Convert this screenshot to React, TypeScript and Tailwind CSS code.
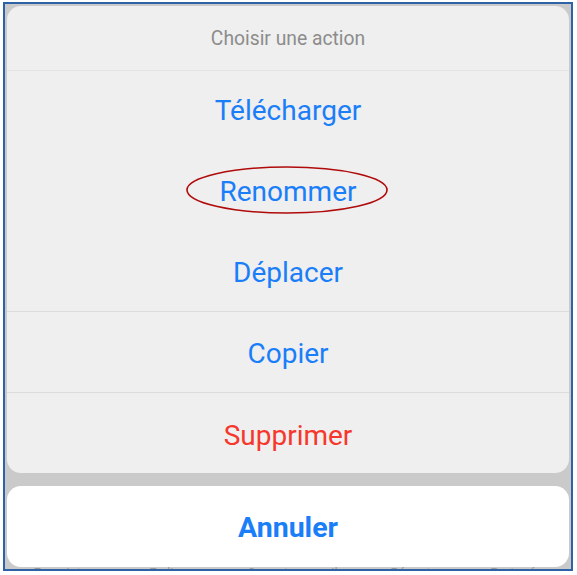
import React from "react";

const actions = [
  { label: "Télécharger", color: "text-[#1a7ef8]", line: false, nudge: "" },
  { label: "Renommer", color: "text-[#1a7ef8]", line: false, nudge: "pt-[2px]", circled: true },
  { label: "Déplacer", color: "text-[#1a7ef8]", line: false, nudge: "pt-[4px]" },
  { label: "Copier", color: "text-[#1a7ef8]", line: true, nudge: "pt-[4px]" },
  { label: "Supprimer", color: "text-[#f6372c]", line: true, nudge: "pt-[5px]" },
];

const tabs = ["Enregistrer", "En ligne", "Sur cet appareil", "Récents", "Partagés"];

export default function App() {
  return (
    <div
      className="w-[577px] h-[575px] bg-white pl-[3px] pr-[4px] pt-[2px] pb-[4px]"
      style={{ fontFamily: "Roboto, 'Liberation Sans', sans-serif" }}
    >
      <div className="h-full border-2 border-[#2d62a6] bg-[#cacaca] px-[2px] pt-[2px] flex flex-col">
        {/* action sheet */}
        <div className="bg-[#efefef] rounded-[14px] flex flex-col">
          <div className="h-[64px] pt-[2px] flex items-center justify-center text-[19.3px] text-[#8c8c8c]">
            Choisir une action
          </div>
          <div className="h-px bg-[#e2e2e2]" />
          {actions.map((a) => (
            <div key={a.label}>
              {a.line && <div className="h-px bg-[#dcdcdc]" />}
              <div
                className={`relative h-[80px] flex items-center justify-center text-[28px] ${a.nudge} ${a.color}`}
              >
                {a.label}
                {a.circled && (
                  <svg
                    className="absolute left-[178px] top-[14px]"
                    width="204"
                    height="50"
                    viewBox="0 0 204 50"
                  >
                    <ellipse
                      cx="102"
                      cy="25"
                      rx="100"
                      ry="23"
                      fill="none"
                      stroke="#b00a0a"
                      strokeWidth="1.6"
                    />
                  </svg>
                )}
              </div>
            </div>
          ))}
        </div>

        {/* cancel */}
        <div className="mt-[13px] h-[81px] pt-[3px] bg-white rounded-[14px] flex items-center justify-center text-[28.5px] font-bold text-[#1a7ef8]">
          Annuler
        </div>

        {/* tab bar peeking out underneath */}
        <div className="h-[2px] overflow-hidden">
          <div className="flex justify-around text-[13px] text-[#9a9a9a] -mt-[1px] leading-none">
            {tabs.map((t) => (
              <span key={t}>{t}</span>
            ))}
          </div>
        </div>
      </div>
    </div>
  );
}
